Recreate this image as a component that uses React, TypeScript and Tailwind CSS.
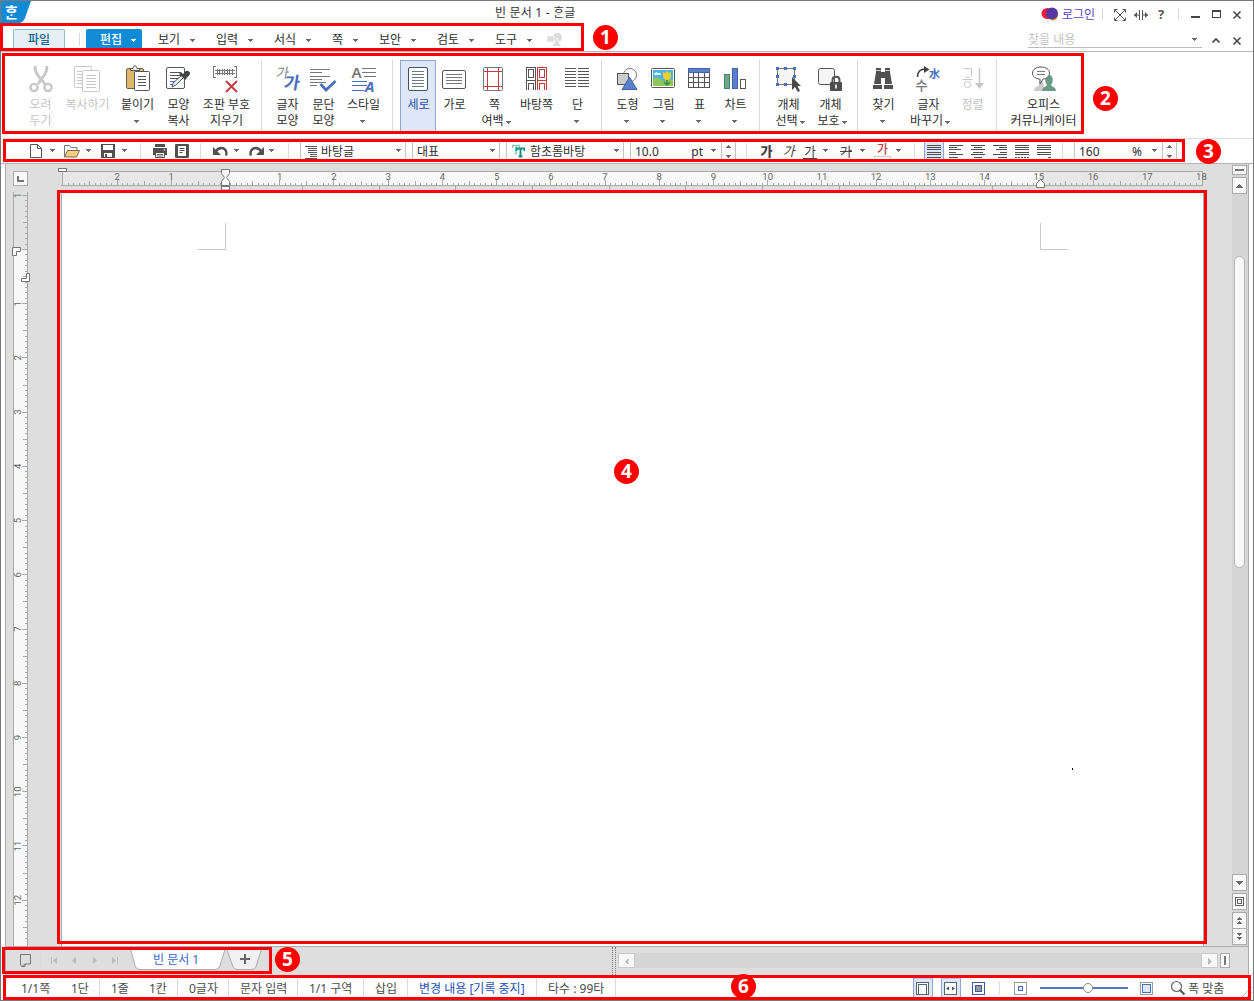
import type { ReactNode } from 'react';

const DARK = '#555555';
const BLUE = '#4a6ebe';
const RED = '#c23c3c';
const LIGHT = '#c8c8c8';

interface RibbonItem {
  lines: string[];
  icon?: ReactNode;
  className: string;
  arrow?: 'below' | 'inline';
  disabled?: boolean;
  active?: boolean;
}

const hLines = (x1: number, x2: number, ys: number[], stroke = DARK) =>
  ys.map((y) => <path key={y} d={`M${x1} ${y}H${x2}`} stroke={stroke} shapeRendering="crispEdges" />);

const ribbonGroups: RibbonItem[][] = [
  [
    {
      lines: ['오려', '두기'],
      className: 'ml-[22px] w-[36px]',
      disabled: true,
      icon: (
        <g stroke={LIGHT} fill="none">
          <path d="M11 2c0 5 2 9 5 12l5 6" strokeWidth="3" />
          <path d="M23 2c0 5-2 9-5 12l-4 6" strokeWidth="3" />
          <circle cx="10" cy="23.500" r="3.600" strokeWidth="2.400" />
          <circle cx="24" cy="23.500" r="3.600" strokeWidth="2.400" />
        </g>
      ),
    },
    {
      lines: ['복사하기'],
      className: 'ml-[4px] w-[50px]',
      disabled: true,
      icon: (
        <g fill="#fff" stroke={LIGHT}>
          <rect x="3.500" y="2.500" width="17" height="21" rx="1" />
          {hLines(6, 11, [7.5, 10.5, 13.5, 16.5, 19.5], LIGHT)}
          <rect x="11.500" y="6.500" width="17" height="21" rx="1" />
          {hLines(15, 25, [11.5, 14.5, 17.5, 20.5, 23.5], LIGHT)}
        </g>
      ),
    },
    {
      lines: ['붙이기'],
      className: 'ml-[6px] w-[38px]',
      arrow: 'below',
      icon: (
        <g stroke={DARK}>
          <rect x="5.500" y="4.500" width="17" height="20" rx="1.500" fill="#deb76c" stroke="#6d6048" />
          <path d="M9.500 6.500V4.500H12c0-3.500 4-3.500 4 0h2.500v2z" fill="#eee" />
          <rect x="13.500" y="7.500" width="15" height="19" rx="1" fill="#fff" />
          {hLines(17, 25, [12.5, 15.5, 18.5, 21.5])}
        </g>
      ),
    },
    {
      lines: ['모양', '복사'],
      className: 'ml-[4px] w-[36px]',
      icon: (
        <g>
          <rect x="4.500" y="3.500" width="18" height="21" rx="1.500" fill="#fff" stroke={DARK} />
          {hLines(8, 19, [8.5, 11.5, 14.5])}
          {hLines(8, 14, [17.5, 20.5], BLUE)}
          <path d="M10 23l1-4 9-8 2 2-8 8z" fill="#e3ebf7" stroke={DARK} />
          <path d="M18 9l6 6" stroke="#444" strokeWidth="2.600" />
          <path d="M20 11c2-1 3-5 6-4s3 4-2 7z" fill="#444" />
        </g>
      ),
    },
    {
      lines: ['조판 부호', '지우기'],
      className: 'ml-[2px] w-[56px]',
      icon: (
        <g fill="none" stroke="#777">
          <g shapeRendering="crispEdges">
            <path d="M6 2.500H3.500v11H6M24 2.500h2.500v11H24" />
            <path d="M5 6.500h20M5 9.500h20M7.500 5v6M9.500 5v6M12.500 5v6M14.500 5v6M17.500 5v6M19.500 5v6M22.500 5v6" />
          </g>
          <path d="M16 17l11 11M27 17L16 28" stroke={RED} strokeWidth="2" />
        </g>
      ),
    },
  ],
  [
    {
      lines: ['글자', '모양'],
      className: 'ml-[7px] w-[36px]',
      icon: (
        <g textAnchor="middle">
          <text x="0" y="0" fontSize="14" fill="#888" transform="translate(11 14) skewX(-9)">가</text>
          <text x="0" y="0" fontSize="17" fontWeight="700" fill={BLUE} transform="translate(20 25) skewX(-9)">가</text>
        </g>
      ),
    },
    {
      lines: ['문단', '모양'],
      className: 'w-[36px]',
      icon: (
        <g fill="none">
          {hLines(3, 23, [5.5, 12.5], '#777')}
          {hLines(3, 15, [8.5, 15.5], '#777')}
          {hLines(3, 19, [18.5], '#777')}
          {hLines(3, 10, [21.5], '#777')}
          <path d="M13.500 20l5.500 6 9.500-9" stroke={BLUE} strokeWidth="2.800" />
        </g>
      ),
    },
    {
      lines: ['스타일'],
      className: 'ml-[2px] w-[40px]',
      arrow: 'below',
      icon: (
        <g>
          {hLines(15, 29, [4.5, 8.5], '#777')}
          {hLines(17, 29, [12.5], '#777')}
          {hLines(5, 20, [17.5, 21.5], BLUE)}
          {hLines(5, 17, [26.5], BLUE)}
          <text x="4.500" y="14" fontSize="15" fontWeight="600" fill="#777">A</text>
          <text x="18" y="27.500" fontSize="15" fontWeight="700" fontStyle="italic" fill={BLUE}>A</text>
        </g>
      ),
    },
  ],
  [
    {
      lines: ['세로'],
      className: 'ml-[7px] w-[36px]',
      active: true,
      icon: (
        <g>
          <rect x="6.500" y="3.500" width="19" height="23" rx="1.500" fill="#fbffff" stroke="#44524f" />
          {hLines(10, 22, [7.5, 10.5, 13.5, 16.5, 19.5, 22.5], '#6d7b78')}
        </g>
      ),
    },
    {
      lines: ['가로'],
      className: 'w-[36px]',
      icon: (
        <g>
          <rect x="4.500" y="6.500" width="23" height="18" rx="1.500" fill="#fff" stroke={DARK} />
          {hLines(8, 24, [10.5, 13.5, 16.5, 19.5], '#777')}
        </g>
      ),
    },
    {
      lines: ['쪽', '여백'],
      className: 'ml-[2px] w-[40px]',
      arrow: 'inline',
      icon: (
        <g fill="none">
          <rect x="5.500" y="3.500" width="19" height="23" rx="1" stroke="#777" />
          <path d="M9.500 4v22M20.500 4v22M6 7.500h18M6 22.500h18" stroke={RED} />
        </g>
      ),
    },
    {
      lines: ['바탕쪽'],
      className: 'ml-[2px] w-[40px]',
      icon: (
        <g fill="none" shapeRendering="crispEdges">
          <path d="M6.500 26V3.500h9V26M6.500 16.500H16M8.500 5.500h5v8h-5zM8.500 26v-6.500h5V26" stroke={DARK} />
          <path d="M17.500 26V3.500h9V26M17.500 16.500H27M19.500 5.500h5v8h-5zM19.500 26v-6.500h5V26" stroke={RED} />
        </g>
      ),
    },
    {
      lines: ['단'],
      className: 'ml-[3px] w-[36px]',
      arrow: 'below',
      icon: (
        <g>
          {hLines(4, 15, [4.5, 7.5, 10.5, 13.5, 16.5, 19.5, 22.5])}
          {hLines(17, 28, [4.5, 7.5, 10.5, 13.5, 16.5, 19.5, 22.5])}
        </g>
      ),
    },
  ],
  [
    {
      lines: ['도형'],
      className: 'ml-[7px] w-[36px]',
      arrow: 'below',
      icon: (
        <g stroke={DARK}>
          <circle cx="19" cy="11" r="6.500" fill="#fff" stroke="#777" />
          <rect x="6.500" y="9.500" width="11" height="11" fill="#ccc" />
          <path d="M18.500 13L26 25.500H11z" fill="#5b80c8" stroke="#3f62ad" />
        </g>
      ),
    },
    {
      lines: ['그림'],
      className: 'w-[36px]',
      arrow: 'below',
      icon: (
        <g>
          <rect x="4.500" y="4.500" width="23" height="19" rx="1" fill="#fff" stroke={DARK} />
          <rect x="6" y="6" width="20" height="16" fill="#4bb5ea" />
          <path d="M6 15c3-3 6-1 9 1s7 0 11-1v7H6z" fill="#8fc65a" />
          <path d="M7 10q2-3 4-1 3-1 3 2H7z" fill="#e4f5fd" />
          <path d="M20 15v6M17 18l3 3 3-3" stroke="#3f8b3b" fill="none" strokeWidth="1.400" />
          <path d="M16 8l2 1 2-2 2 2 2-1v5q-1 3-4 3t-4-3z" fill="#f5cf26" />
        </g>
      ),
    },
    {
      lines: ['표'],
      className: 'w-[36px]',
      arrow: 'below',
      icon: (
        <g stroke={DARK} fill="none" shapeRendering="crispEdges">
          <rect x="5.500" y="4.500" width="21" height="19" fill="#fff" />
          <rect x="5.500" y="4.500" width="21" height="4" fill="#5b80c8" stroke="#3f62ad" />
          <path d="M6 13.500h20M6 18.500h20M10.500 9v14M15.500 9v14M21.500 9v14" />
        </g>
      ),
    },
    {
      lines: ['차트'],
      className: 'w-[36px]',
      arrow: 'below',
      icon: (
        <g shapeRendering="crispEdges">
          <rect x="5.500" y="10.500" width="5" height="14" fill="#6aa888" stroke="#4c8067" />
          <rect x="13.500" y="4.500" width="5" height="20" fill="#5b80c8" stroke="#3f62ad" />
          <rect x="21.500" y="15.500" width="5" height="9" fill="#fff" stroke={DARK} />
        </g>
      ),
    },
  ],
  [
    {
      lines: ['개체', '선택'],
      className: 'ml-[10px] w-[36px]',
      arrow: 'inline',
      icon: (
        <g>
          <rect x="5.500" y="4.500" width="17" height="16" fill="#f5f5f5" stroke="#777" />
          <path
            d="M4 3h3v3H4zM12 3h3v3h-3zM21 3h3v3h-3zM4 11h3v3H4zM21 11h3v3h-3zM4 19h3v3H4zM12 19h3v3h-3z"
            fill={BLUE}
          />
          <path d="M20 13v13l3-3 3 5 2-1-2.500-5H29z" fill="#4a4a4a" />
        </g>
      ),
    },
    {
      lines: ['개체', '보호'],
      className: 'ml-[6px] w-[36px]',
      arrow: 'inline',
      icon: (
        <g>
          <rect x="4.500" y="4.500" width="16" height="16" rx="2" fill="#f5f5f5" stroke={DARK} />
          <path d="M18.500 19v-3c0-4.500 7-4.500 7 0v3" fill="none" stroke={DARK} strokeWidth="2" />
          <rect x="16" y="18" width="12" height="9" rx="1" fill="#4f4f4f" />
          <path d="M22 20.500v4" stroke="#fff" strokeWidth="1.600" />
        </g>
      ),
    },
  ],
  [
    {
      lines: ['찾기'],
      className: 'ml-[7px] w-[36px]',
      arrow: 'below',
      icon: (
        <g fill="#505050">
          <path d="M9 4h5v4h4V4h5v4l2 12h-7v-6h-4v6H7L9 8z" />
          <path d="M6 21h9v4H6zM17 21h9v4h-9z" />
          <path d="M9 6.500h5M18 6.500h5" stroke="#fff" strokeWidth=".7" />
        </g>
      ),
    },
    {
      lines: ['글자', '바꾸기'],
      className: 'ml-[5px] w-[44px]',
      arrow: 'inline',
      icon: (
        <g textAnchor="middle">
          <path d="M5.500 13c0-5 3-8 8-8" fill="none" stroke="#444" strokeWidth="1.600" />
          <path d="M12 2l5.500 3.500L12 9z" fill="#444" />
          <text x="22.500" y="14" fontSize="11" fontWeight="700" fill={BLUE}>水</text>
          <text x="9.500" y="26" fontSize="13" fill="#777" stroke="#777" strokeWidth=".3">수</text>
        </g>
      ),
    },
    {
      lines: ['정렬'],
      className: 'ml-[4px] w-[36px]',
      disabled: true,
      icon: (
        <g fill="none" stroke={LIGHT}>
          <path d="M7.500 4.500h8v8M6.500 15.500h10M9.500 13.500h4" />
          <ellipse cx="11.500" cy="20.500" rx="3.500" ry="3" />
          <path d="M23.500 4v17" strokeWidth="1.600" />
          <path d="M19 19h9l-4.500 6z" fill={LIGHT} stroke="none" />
        </g>
      ),
    },
  ],
  [
    {
      lines: ['오피스', '커뮤니케이터'],
      className: 'ml-[10px] w-[72px]',
      icon: (
        <g>
          <path d="M7 27c0-4 3-4 5-6v-4h4l2 10z" fill="#ccc" />
          <path d="M15 27c0-4 4-4 5-6-3-4-2-10 2-10s5 6 2 10c1 2 5 2 5 6z" fill="#6a9a83" />
          <path
            d="M14 3c5 0 8.500 2.500 8.500 6S19 15 16 15l-3 5v-5C8.500 15 5.500 12.500 5.500 9S9 3 14 3z"
            fill="#fff"
            stroke={DARK}
          />
          {hLines(10, 18, [7.5, 10.5], '#777')}
        </g>
      ),
    },
  ],
];

function Arrow({ className = '', fill = '#6a6a6a' }: { className?: string; fill?: string }) {
  return (
    <svg className={`h-[4px] w-[6px] shrink-0 ${className}`} viewBox="0 0 6 4" shapeRendering="crispEdges">
      <path d="M0 0h5v1H0zM1 1h3v1H1zM2 2h1v1H2z" fill={fill} />
    </svg>
  );
}

// 7px and 5px wide triangles for the scroll bar buttons
function ScrollArrow({ className = '', fill = '#6a6a6a' }: { className?: string; fill?: string }) {
  return (
    <svg className={`h-[4px] w-[7px] shrink-0 ${className}`} viewBox="0 0 7 4" shapeRendering="crispEdges">
      <path d="M0 0h7v1H0zM1 1h5v1H1zM2 2h3v1H2zM3 3h1v1H3z" fill={fill} />
    </svg>
  );
}

function SmallArrow({ className = '' }: { className?: string }) {
  return (
    <svg className={`h-[3px] w-[5px] shrink-0 ${className}`} viewBox="0 0 5 3" shapeRendering="crispEdges">
      <path d="M0 0h5v1H0zM1 1h3v1H1zM2 2h1v1H2z" fill="#6a6a6a" />
    </svg>
  );
}

function Sep({ className = '' }: { className?: string }) {
  return <div className={`w-px shrink-0 bg-[#d9d9d9] ${className}`} />;
}

function RibbonButton({ item }: { item: RibbonItem }) {
  const { lines, icon, className, arrow, disabled, active } = item;
  const color = disabled ? 'text-[#c3c3c3]' : active ? 'text-[#2b4fa5]' : 'text-[#2e2e2e]';
  return (
    <div
      className={`flex h-[74px] shrink-0 flex-col items-center pt-[4px] ${className} ${
        active ? 'bg-[#dde7f8] outline outline-1 -outline-offset-1 outline-[#8ca6dc]' : ''
      }`}
    >
      <svg className="h-[33px] w-[32px] shrink-0 overflow-visible" viewBox="0 0 32 33">
        {icon}
      </svg>
      {lines.map((line, i) => {
        const inline = arrow === 'inline' && i === lines.length - 1;
        return (
          <div
            key={line}
            className={`flex h-[16px] items-center whitespace-nowrap leading-[16px] ${color} ${
              inline ? 'pl-[5px]' : 'pl-px'
            }`}
          >
            {line}
            {inline && <Arrow className="mt-[3px] ml-[2px]" />}
          </div>
        );
      })}
      {arrow === 'below' && <Arrow className="mt-[7px]" />}
    </div>
  );
}

const menus = [
  { label: '보기', className: 'w-[58px]' },
  { label: '입력', className: 'w-[58px]' },
  { label: '서식', className: 'w-[58px]' },
  { label: '쪽', className: 'w-[47px]' },
  { label: '보안', className: 'w-[58px]' },
  { label: '검토', className: 'w-[58px]' },
  { label: '도구', className: 'w-[52px]' },
];

function TitleBar() {
  return (
    <div className="flex h-[25px] shrink-0 items-center">
      <svg className="h-[25px] w-[32px] shrink-0" viewBox="0 0 32 25">
        <path d="M0 1h31l-6 17q-2 5-6 5H0z" fill="#128bd6" />
        <text x="11.500" y="17.500" fontSize="15" fontWeight="700" fill="#fff" textAnchor="middle">
          ᄒᆞᆫ
        </text>
      </svg>
      <div className="ml-[463px] w-[100px] tracking-[0.2px] whitespace-pre text-[#333]">빈 문서 1 - ᄒᆞᆫ글</div>
      <svg className="mt-[2px] ml-[446px] h-[16px] w-[18px]" viewBox="0 0 18 16">
        <ellipse cx="12" cy="9" rx="5" ry="5.500" fill="#f79a2a" />
        <ellipse cx="6.500" cy="7.500" rx="6" ry="5.500" fill="#e3203f" />
        <ellipse cx="11" cy="7.500" rx="6" ry="6" fill="#5637a4" />
      </svg>
      <div className="mt-[5px] ml-[3px] w-[34px] whitespace-nowrap text-[#5a3fc4]">로그인</div>
      <Sep className="mt-[3px] ml-[6px] h-[11px]" />
      <svg className="mt-[4px] ml-[11px] h-[12px] w-[12px]" viewBox="0 0 12 12" fill="none" stroke="#555">
        <path d="M.5 3.500v-3h3M8.500.5h3v3M11.500 8.500v3h-3M3.500 11.500h-3v-3M1 1l10 10M11 1L1 11" />
      </svg>
      <svg className="mt-[4px] ml-[8px] h-[12px] w-[14px]" viewBox="0 0 14 12" fill="none" stroke="#555">
        <path d="M5.500 1v10M8.500 1v10M0 6h5M9 6h5" />
        <path d="M0 6l3-3v6zM14 6l-3-3v6z" fill="#555" stroke="none" />
      </svg>
      <div className="mt-[3px] ml-[8px] w-[10px] text-center text-[13px] font-bold text-[#555]">?</div>
      <Sep className="mt-[3px] ml-[12px] h-[11px]" />
      <div className="mt-[8px] ml-[12px] h-[2px] w-[9px] bg-[#444]" />
      <div className="mt-[3px] ml-[12px] h-[8px] w-[9px] border border-t-2 border-[#444]" />
      <svg className="mt-[4px] ml-[12px] h-[8px] w-[8px]" viewBox="0 0 8 8" stroke="#444" strokeWidth="1.500">
        <path d="M.5.5l7 7M7.500.5l-7 7" />
      </svg>
    </div>
  );
}

function MenuBar() {
  return (
    <div className="flex h-[27px] shrink-0 border-b border-[#b9b9b9] pt-[4px]">
      <div className="ml-[13px] h-[22px] w-[52px] rounded-t-[2px] border border-b-0 border-[#93b9c8] bg-[#e5eff6] text-center leading-[19px] font-medium text-[#0f6390]">
        파일
      </div>
      <Sep className="mt-[4px] ml-[14px] h-[13px]" />
      <div className="mr-[16px] ml-[6px] flex h-[22px] w-[56px] items-center rounded-t-[2px] bg-[#128bd6] pl-[14px] font-medium text-white">
        편집
        <Arrow className="mt-px ml-[9px]" fill="#fff" />
      </div>
      {menus.map((m) => (
        <div key={m.label} className={`flex h-[22px] shrink-0 items-center text-[#2e2e2e] ${m.className}`}>
          {m.label}
          <Arrow className="mt-px ml-[10px]" />
        </div>
      ))}
      <svg className="mt-[4px] h-[14px] w-[16px]" viewBox="0 0 16 14" fill="#dcdcdc">
        <circle cx="10.500" cy="4.500" r="4.500" />
        <path d="M0 3h7v6H0z" stroke="#fff" strokeWidth=".6" />
        <path d="M10 5l4 8.500H5z" stroke="#fff" strokeWidth=".6" />
      </svg>
      <div className="ml-auto flex h-[19px] w-[174px] items-center border-b border-[#bdbdbd] pt-[3px] text-[#c3c3c3]">
        찾을 내용
        <Arrow className="mr-[4px] ml-auto" />
      </div>
      <svg className="mt-[9px] ml-[10px] h-[6px] w-[8px]" viewBox="0 0 8 6" fill="none" stroke="#444" strokeWidth="1.600">
        <path d="M.5 4.500L4 1l3.500 3.500" />
      </svg>
      <svg className="mt-[8px] mr-[13px] ml-[13px] h-[8px] w-[8px]" viewBox="0 0 8 8" stroke="#444" strokeWidth="1.500">
        <path d="M.5.5l7 7M7.500.5l-7 7" />
      </svg>
    </div>
  );
}

function Ribbon() {
  return (
    <div className="flex h-[87px] shrink-0 items-start border-b border-[#dcdfe2] pt-[8px]">
      {ribbonGroups.map((group, i) => (
        <div key={i} className="flex">
          {group.map((item) => (
            <RibbonButton key={item.lines.join()} item={item} />
          ))}
          {i === 0 && <Sep className="ml-[7px] h-[71px]" />}
          {i === 1 && <Sep className="ml-[9px] h-[71px]" />}
          {(i === 2 || i === 3 || i === 5) && <Sep className="ml-[6px] h-[71px]" />}
          {i === 4 && <Sep className="ml-[9px] h-[71px]" />}
        </div>
      ))}
    </div>
  );
}

function Spinner() {
  return (
    <div className="flex h-full w-[14px] flex-col items-center justify-center gap-[7px] border-l border-[#c4c4c4]">
      <SmallArrow className="rotate-180" />
      <SmallArrow />
    </div>
  );
}

const alignIcons: { widths: [number, number][]; dashed?: boolean }[] = [
  { widths: [[0, 14], [0, 14], [0, 14], [0, 14], [0, 14], [0, 14]] },
  { widths: [[0, 14], [0, 8], [0, 12], [0, 7], [0, 14], [0, 9]] },
  { widths: [[0, 14], [3, 11], [0, 14], [2, 12], [0, 14], [3, 11]] },
  { widths: [[0, 14], [6, 14], [3, 14], [7, 14], [0, 14], [5, 14]] },
  { widths: [[0, 14], [0, 14], [0, 14], [0, 14], [0, 14]], dashed: true },
  { widths: [[0, 14], [0, 14], [0, 14], [0, 14], [0, 14], [11, 14]] },
];

function FormatBar() {
  const combo = 'flex h-[18px] shrink-0 items-center border-x border-[#c4c4c4] text-[#2e2e2e]';
  return (
    <div className="flex h-[25px] shrink-0 items-center border-b border-[#b5b5b5]">
      <svg className="ml-[29px] h-[16px] w-[14px]" viewBox="0 0 14 16">
        <path d="M1.500 1.500h7l4 4v9h-11zM8.500 1.500v4h4" fill="#fff" stroke={DARK} />
      </svg>
      <Arrow className="ml-[7px]" />
      <svg className="ml-[7px] h-[16px] w-[18px]" viewBox="0 0 18 16" stroke="#80684a">
        <path d="M1.500 14V2.500h5l1.500 2h6v3" fill="#fff" stroke="#777" />
        <path d="M4.500 7.500h12l-3 6.500H1.500z" fill="#f1cf82" />
      </svg>
      <Arrow className="ml-[5px]" />
      <svg className="ml-[8px] h-[16px] w-[16px]" viewBox="0 0 16 16">
        <path d="M1 1h14v14H1z" fill="#505050" />
        <path d="M3 2h10v5H3zM4 10h8v4H4z" fill="#fff" />
        <path d="M5 11h2v3H5z" fill="#505050" />
      </svg>
      <Arrow className="ml-[6px]" />
      <Sep className="ml-[12px] h-[16px]" />
      <svg className="ml-[11px] h-[16px] w-[16px]" viewBox="0 0 16 16">
        <path d="M3 1h10v3H3zM1 5h14v7h-2v-2H3v2H1z" fill="#505050" />
        <path d="M3.500 9.500h9v5h-9z" fill="#fff" stroke="#505050" />
        <path d="M5 11.500h6M5 13h6" stroke="#505050" strokeWidth=".8" />
        <circle cx="12.500" cy="7" r=".8" fill="#fff" />
      </svg>
      <svg className="ml-[6px] h-[16px] w-[16px]" viewBox="0 0 16 16">
        <rect x="1" y="1" width="14" height="14" rx="1" fill="#505050" />
        <path d="M4 3h8v10H4z" fill="#fff" />
        <path d="M5.500 5.500h5M5.500 7.500h5M5.500 9.500h3" stroke="#505050" />
      </svg>
      <Sep className="ml-[10px] h-[16px]" />
      <svg className="ml-[12px] h-[12px] w-[16px]" viewBox="0 0 16 12">
        <path d="M3 6c3-4 8-4 10 0 .7 1.500.7 3 0 4.500" fill="none" stroke="#505050" strokeWidth="2.400" />
        <path d="M0 2v8h8z" fill="#505050" />
      </svg>
      <Arrow className="ml-[5px]" />
      <svg className="ml-[8px] h-[12px] w-[16px] -scale-x-100" viewBox="0 0 16 12">
        <path d="M3 6c3-4 8-4 10 0 .7 1.500.7 3 0 4.500" fill="none" stroke="#505050" strokeWidth="2.400" />
        <path d="M0 2v8h8z" fill="#505050" />
      </svg>
      <Arrow className="ml-[5px]" />
      <Sep className="ml-[13px] h-[16px]" />

      <div className={`ml-[11px] w-[106px] ${combo}`}>
        <svg className="mt-px ml-[4px] h-[14px] w-[13px]" viewBox="0 0 13 14">
          {hLines(0, 12, [1.5, 13.5])}
          {hLines(3, 12, [3.5, 5.5, 7.5])}
          {hLines(5, 12, [9.5, 11.5])}
        </svg>
        <span className="mt-[2px] ml-[3px]">바탕글</span>
        <Arrow className="mr-[3px] ml-auto" />
      </div>
      <div className={`ml-[6px] w-[88px] ${combo}`}>
        <span className="mt-[2px] ml-[4px]">대표</span>
        <Arrow className="mr-[3px] ml-auto" />
      </div>
      <div className={`ml-[6px] w-[118px] ${combo}`}>
        <svg className="ml-[5px] h-[14px] w-[13px]" viewBox="0 0 13 14" fill="none">
          <path d="M.5 4V1.500h7V4M4 1.500v8M2.500 9.500H5" stroke="#8cc9b4" strokeWidth="1.400" />
          <path d="M4.500 7V4.500h8V7M8.500 4.500v8M6.500 12.500h4" stroke="#129382" strokeWidth="2" />
        </svg>
        <span className="mt-[2px] ml-[5px]">함초롬바탕</span>
        <Arrow className="mr-[3px] ml-auto" />
      </div>
      <div className={`ml-[6px] w-[106px] ${combo}`}>
        <span className="mt-[2px] ml-[4px]">10.0</span>
        <span className="mt-[2px] mr-[8px] ml-auto">pt</span>
        <Arrow className="mr-[4px]" />
        <Spinner />
      </div>
      <Sep className="ml-[10px] h-[16px]" />

      <span className="ml-[13px] w-[13px] text-center text-[13px] font-black text-[#444]">가</span>
      <span className="ml-[9px] w-[13px] text-center text-[13px] text-[#444] italic">가</span>
      <span className="ml-[8px] flex h-[15px] w-[14px] justify-center border-b border-[#444] text-[13px] leading-[14px] text-[#444]">가</span>
      <Arrow className="ml-[6px]" />
      <span className="ml-[10px] w-[14px] text-center text-[13px] text-[#444] line-through">가</span>
      <Arrow className="ml-[7px]" />
      <div className="ml-[8px] flex w-[17px] flex-col items-center">
        <span className="mt-px h-[12px] text-[12px] leading-[12px] font-medium text-[#c23c3c]">가</span>
        <div className="h-[4px] w-full border border-[#ccc]" />
      </div>
      <Arrow className="ml-[5px]" />
      <Sep className="ml-[12px] h-[16px]" />
      <div className="ml-[9px] flex gap-[2px]">
        {alignIcons.map((icon, i) => (
          <div
            key={i}
            className={`flex h-[20px] w-[20px] items-center justify-center ${
              i === 0 ? 'border-x border-[#8ca6dc] bg-[#dde7f8]' : ''
            }`}
          >
            <svg className="h-[14px] w-[14px]" viewBox="0 0 14 14" shapeRendering="crispEdges">
              {icon.widths.map(([a, b], n) => (
                <path key={n} d={`M${a} ${n * 2.4 + 1}H${b}`} stroke="#4c4c4c" />
              ))}
              {icon.dashed && <path d="M0 13H14" stroke="#4c4c4c" strokeDasharray="2 1" />}
            </svg>
          </div>
        ))}
      </div>
      <Sep className="ml-[8px] h-[16px]" />
      <div className={`ml-[11px] w-[103px] ${combo}`}>
        <span className="mt-[2px] ml-[4px]">160</span>
        <span className="mt-[2px] mr-[10px] ml-auto">%</span>
        <Arrow className="mr-[4px]" />
        <Spinner />
      </div>
    </div>
  );
}

const UNIT = 54.22;

function ticks(from: number, to: number) {
  return Array.from({ length: to - from + 1 }, (_, i) => from + i);
}

const tickSize = (t: number) => (t % 10 === 0 ? 5 : t % 5 === 0 ? 4 : 2);

function HorizontalRuler() {
  return (
    <svg className="h-[26px] w-[1143px] shrink-0 overflow-visible" viewBox="61 164 1143 26">
      <rect x="61" y="171" width="1142" height="15" fill="#e7e7e7" />
      <rect x="225" y="171" width="815" height="15" fill="#f8f8f8" />
      <g stroke="#a9a9a9" shapeRendering="crispEdges">
        <path d="M61 171.500H1202.500V185.500H61M62 171v15" fill="none" />
        {ticks(-29, 179).map((t) => {
          const x = Math.round(225 + (t * UNIT) / 10) + 0.5;
          return <path key={t} d={`M${x} 185V${184 - tickSize(t) + 1}`} />;
        })}
        {ticks(1, 10).map((t) => {
          const x = Math.round(225.6 + t * 76.62) + 0.5;
          return <path key={t} d={`M${x} 186v4`} />;
        })}
      </g>
      <g fontFamily="Roboto" fontSize="9.500" fill="#666" textAnchor="middle">
        {ticks(-2, 18)
          .filter((n) => n !== 0)
          .map((n) => (
            <text key={n} x={225.5 + n * UNIT} y="180">
              {Math.abs(n)}
            </text>
          ))}
      </g>
      <g fill="#fff" stroke="#777">
        <rect x="58.500" y="168.500" width="8" height="3" />
        <path d="M221.500 169.500h8v4l-3 4 3 4v4h-8v-4l3-4-3-4z" />
        <rect x="221.500" y="186.500" width="8" height="3.500" />
        <path d="M1036.500 187.500v-4l4-4 4 4v4z" />
      </g>
    </svg>
  );
}

function VerticalRuler() {
  return (
    <svg className="mt-[6px] h-[754px] w-[15px] shrink-0 overflow-visible" viewBox="13 192 15 754">
      <rect x="13" y="192" width="15" height="58" fill="#e2e2e2" />
      <rect x="13" y="250" width="15" height="696" fill="#f8f8f8" />
      <g stroke="#a9a9a9" shapeRendering="crispEdges">
        <path d="M13.500 192v754M27.500 192v754" />
        {ticks(-10, 127).map((t) => {
          const y = Math.round(249 + (t * UNIT) / 10) + 0.5;
          return <path key={t} d={`M27 ${y}H${27 - tickSize(t)}`} />;
        })}
      </g>
      <g fontFamily="Roboto" fontSize="9.500" fill="#666" textAnchor="middle">
        {ticks(-1, 12)
          .filter((n) => n !== 0)
          .map((n) => {
            const y = 249.5 + n * UNIT;
            return (
              <text key={n} x="21.500" y={y} transform={`rotate(-90 21.500 ${y})`}>
                {Math.abs(n)}
              </text>
            );
          })}
      </g>
      <g fill="#fff" stroke="#777">
        <path d="M12.500 247.500h8v4h-4v4h-4z" />
        <path d="M29.500 273.500v8h-8v-3h5v-5z" />
      </g>
    </svg>
  );
}

const squareButton = 'flex w-[15px] shrink-0 items-center justify-center border border-[#ababab] bg-[#f8f8f8]';

function Workspace() {
  return (
    <div className="ml-[5px] flex h-[783px] w-[1244px] shrink-0 border-x border-b border-[#ababab] bg-[#dedede]">
      <div className="flex w-[55px] shrink-0 flex-col pt-[7px] pl-[7px]">
        <div className={`h-[15px] ${squareButton}`}>
          <div className="h-[6px] w-[7px] border-b-2 border-l-2 border-[#777]" />
        </div>
        <VerticalRuler />
      </div>
      <div className="flex w-[1143px] shrink-0 flex-col">
        <HorizontalRuler />
        <div className="h-[756px] border-x border-[#ababab] bg-white">
          <svg className="h-[756px] w-[1141px]" viewBox="62 190 1141 756" fill="none" stroke="#c8c8c8">
            <path d="M198 249.500h27.500V223M1068 249.500h-27.500V223" />
            <rect x="1072" y="768" width="1" height="2" fill="#000" stroke="none" />
          </svg>
        </div>
      </div>
      <div className="ml-[28px] flex w-[16px] flex-col bg-[#d5d5d5]">
        <div className={`mt-px h-[10px] ${squareButton}`}>
          <div className="h-[2px] w-[9px] bg-[#777]" />
        </div>
        <div className={`mt-[2px] h-[17px] ${squareButton}`}>
          <ScrollArrow className="rotate-180" />
        </div>
        <div className="mt-[62px] ml-[2px] h-[312px] w-[11px] rounded-full border border-[#b5b5b5] bg-[#f8f8f8]" />
        <div className={`mt-auto h-[17px] ${squareButton}`}>
          <ScrollArrow />
        </div>
        <div className={`mt-[2px] h-[17px] ${squareButton}`}>
          <div className="flex h-[9px] w-[9px] items-center justify-center border border-[#666]">
            <div className="h-[5px] w-[5px] border border-[#666]" />
          </div>
        </div>
        <div className={`mt-[2px] h-[17px] flex-col gap-px ${squareButton}`}>
          <SmallArrow className="rotate-180" />
          <SmallArrow className="rotate-180" />
        </div>
        <div className={`-mt-px mb-px h-[17px] flex-col gap-px ${squareButton}`}>
          <SmallArrow />
          <SmallArrow />
        </div>
      </div>
    </div>
  );
}

function DocumentTabs() {
  return (
    <div className="ml-[5px] flex h-[28px] w-[1244px] shrink-0 border-x border-[#ababab] bg-[#dedede]">
      <svg className="mt-[7px] ml-[14px] h-[14px] w-[12px]" viewBox="0 0 12 14" fill="none" stroke="#777">
        <path d="M.5.500h10v9.500H5v2.500H2q-1.500-.5-1.500-2.500zM2 12.500l3-2.500" />
      </svg>
      <Sep className="mt-[6px] ml-[8px] h-[15px] bg-[#bbb]" />
      <svg className="mt-[9px] ml-[9px] h-[9px] w-[70px]" viewBox="50 0 70 9" fill="#bcbcbc">
        <path d="M51 1h1v7h-1zM57 1v7l-4-3.500zM76 1v7l-4-3.500zM93 1v7l4-3.500zM112 1v7l4-3.500zM117 1h1v7h-1z" />
      </svg>
      <div className="relative ml-[10px] h-[24px] w-[134px]">
        <svg className="h-[24px] w-[134px]" viewBox="130 947 134 24">
          <path d="M226 947.500l7 19q1.500 3 4 3h15q3 0 4-3l6-19" fill="#f1f1f1" stroke="#ababab" />
          <path d="M130 946.500l5 19q1.500 4 4 4h77q2.500 0 4-4l6-19" fill="#fff" stroke="#ababab" />
          <path d="M240 959h10M245 954v10" stroke="#666" strokeWidth="2" />
        </svg>
        <div className="absolute top-px left-[23px] leading-[24px] whitespace-pre text-[#3b66cf]">빈 문서 1</div>
      </div>
      <div className="ml-[348px] h-[28px] w-[4px] border-x border-dotted border-[#777]" />
      <div className="mt-[6px] ml-[2px] flex h-[15px] w-[17px] items-center justify-center border border-[#c8c8c8] bg-[#f8f8f8]">
        <ScrollArrow className="rotate-90" fill="#bcbcbc" />
      </div>
      <div className="mt-[6px] h-[15px] w-[566px] bg-[#d5d5d5]" />
      <div className="mt-[6px] flex h-[15px] w-[17px] items-center justify-center border border-[#c8c8c8] bg-[#f8f8f8]">
        <ScrollArrow className="-rotate-90" fill="#bcbcbc" />
      </div>
      <div className="mt-[6px] ml-[2px] flex h-[15px] w-[10px] items-center justify-center border border-[#ababab] bg-[#f8f8f8]">
        <div className="h-[9px] w-[2px] bg-[#777]" />
      </div>
    </div>
  );
}

const statusItems = [
  { text: '1/1쪽', className: 'ml-[21px] w-[50px]' },
  { text: '1단', className: 'w-[29px] border-r' },
  { text: '1줄', className: 'ml-[11px] w-[38px]' },
  { text: '1칸', className: 'w-[29px] border-r' },
  { text: '0글자', className: 'ml-[11px] w-[40px] border-r' },
  { text: '문자 입력', className: 'ml-[11px] w-[58px] border-r' },
  { text: '1/1 구역', className: 'ml-[11px] w-[55px] border-r' },
  { text: '삽입', className: 'ml-[11px] w-[33px] border-r' },
  { text: '변경 내용 [기록 중지]', className: 'ml-[11px] w-[118px] border-r text-[#2350b8]' },
  { text: '타수 : 99타', className: 'ml-[11px] w-[68px] border-r' },
];

function StatusBar() {
  return (
    <div className="flex h-[26px] shrink-0 items-center text-[#4d4d4d]">
      {statusItems.map((s) => (
        <div
          key={s.text}
          className={`h-[20px] shrink-0 border-[#d9d9d9] leading-[22px] whitespace-pre ${s.className}`}
        >
          {s.text}
        </div>
      ))}
      <svg className="ml-auto h-[20px] w-[260px]" viewBox="910 978 260 20" fill="none">
        <path d="M913.500 978v20h19v-20zM941.500 978v20h19v-20z" fill="#dde7f8" stroke="#8ca6dc" />
        <g shapeRendering="crispEdges">
          <path d="M916.500 982.500h12v12h-12zM918.500 994v-9.500h8V994" stroke="#596662" fill="#f9ffff" />
          <path d="M944.500 982.500h12v12h-12z" stroke="#596662" fill="#f9ffff" />
          <path d="M972.500 982.500h12v12h-12z" stroke="#3e589f" fill="#fff" />
          <path d="M975.500 985.500h6v6h-6z" stroke="#3e589f" fill="#999" />
          <path d="M999.500 981v14" stroke="#d9d9d9" />
          <path d="M1014.500 982.500h12v12h-12z" stroke="#999" />
          <path d="M1018.500 986.500h4v4h-4z" stroke="#4a6ebe" fill="#dde7ff" />
          <path d="M1140.500 982.500h12v12h-12z" stroke="#999" />
          <path d="M1142.500 984.500h8v8h-8z" stroke="#4a6ebe" fill="#dde7ff" />
        </g>
        <path d="M946 988.500l3-2v4zM955 988.500l-3-2v4z" fill="#555" />
        <path d="M1040 988h88" stroke="#5577bf" strokeWidth="2" />
        <circle cx="1088" cy="988" r="4.500" fill="#fff" stroke="#888" />
      </svg>
      <svg className="h-[16px] w-[18px]" viewBox="0 0 18 16" fill="none">
        <circle cx="6.500" cy="6.500" r="5" stroke="#666" strokeWidth="1.200" />
        <path d="M10 10l4.500 4.500" stroke="#555" strokeWidth="2.200" />
      </svg>
      <span className="mt-[2px] w-[46px] whitespace-pre">폭 맞춤</span>
      <svg className="mt-[8px] mr-[2px] ml-[6px] h-[12px] w-[12px]" viewBox="0 0 12 12" stroke="#bbb">
        <path d="M1 12L12 1M6 12l6-6" />
      </svg>
    </div>
  );
}

const callouts = [
  { n: 1, box: 'left-0 top-[23px] h-[28px] w-[584px]', badge: 'left-[593px] top-[25px]' },
  { n: 2, box: 'left-[2px] top-[53px] h-[81px] w-[1082px]', badge: 'left-[1093px] top-[86px]' },
  { n: 3, box: 'left-[3px] top-[139px] h-[23px] w-[1182px]', badge: 'left-[1196px] top-[139px]' },
  { n: 4, box: 'left-[57px] top-[190px] h-[754px] w-[1150px]', badge: 'left-[614px] top-[459px]' },
  { n: 5, box: 'left-[2px] top-[947px] h-[27px] w-[270px]', badge: 'left-[275px] top-[947px]' },
  { n: 6, box: 'left-[3px] top-[975px] h-[25px] w-[1248px]', badge: 'left-[731px] top-[974px]' },
];

export default function App() {
  return (
    <div className="relative flex h-[1001px] w-[1254px] flex-col overflow-hidden bg-white font-['Noto_Sans','Noto_Sans_CJK_KR',sans-serif] text-[12px] leading-[16px]">
      <TitleBar />
      <MenuBar />
      <Ribbon />
      <FormatBar />
      <Workspace />
      <DocumentTabs />
      <StatusBar />

      <div className="pointer-events-none absolute inset-0 border border-[#787878]" />
      {callouts.map((c) => (
        <div key={c.n}>
          <div className={`pointer-events-none absolute border-3 border-[#ff0000] ${c.box}`} />
          <div
            className={`absolute flex h-[25px] w-[25px] items-center justify-center rounded-full bg-[#ff0000] text-[19px] leading-[25px] font-bold text-white ${c.badge}`}
          >
            {c.n}
          </div>
        </div>
      ))}
    </div>
  );
}
